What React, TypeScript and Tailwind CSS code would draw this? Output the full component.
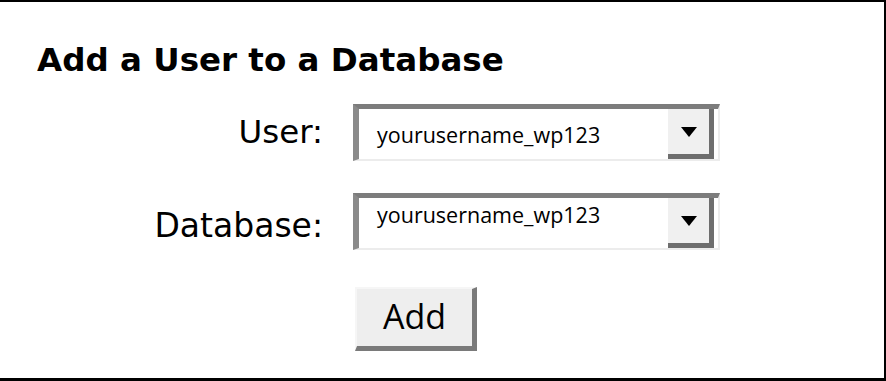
function Select({ pt }: { pt: string }) {
  return (
    <div className="flex h-[57px] w-[367px] border-t-[5px] border-l-[6px] border-b-2 border-r-2 border-t-[#7c7c7c] border-l-[#8a8a8a] border-b-[#ececec] border-r-[#ececec] bg-white">
      <div className={`flex-1 pl-[18px] text-[21.5px] text-black ${pt}`} style={{ fontFamily: '"Open Sans", sans-serif' }}>
        yourusername_wp123
      </div>
      <div className="mr-[4px] flex w-[46px] items-center justify-center border-b-[5px] border-r-[5px] border-b-[#6e6e6e] border-r-[#6e6e6e] bg-[#f0f0f0]">
        <svg width="16" height="10" viewBox="0 0 16 10"><path d="M0 0h16L8 10z" fill="#000" /></svg>
      </div>
    </div>
  );
}

export default function App() {
  return (
    <div className="h-[381px] w-[886px] border-t-2 border-r-2 border-b-[3px] border-black bg-white font-['DejaVu_Sans',sans-serif]">
      <div className="pl-[37px] pt-[38px]">
        <h1 className="text-[32.5px] font-bold leading-[40px] text-black">Add a User to a Database</h1>
        <div className="mt-[24px] grid grid-cols-[286px_367px] items-center gap-x-[30px] gap-y-[32px]">
          <div className="text-right text-[32.5px]">User:</div>
          <Select pt="pt-[10px]" />
          <div className="pt-[8px] text-right text-[33px]">Database:</div>
          <Select pt="pt-[1px]" />
          <div />
          <button className="mt-[4px] ml-[2px] h-[64px] w-[122px] border-t-2 border-l-2 border-b-[5px] border-r-[5px] border-t-[#f6f6f6] border-l-[#f6f6f6] border-b-[#7a7a7a] border-r-[#7a7a7a] bg-[#eeeeee] pb-[2px] text-[34px] leading-none text-black" style={{ fontFamily: '"Open Sans", sans-serif' }}>
            Add
          </button>
        </div>
      </div>
    </div>
  );
}
